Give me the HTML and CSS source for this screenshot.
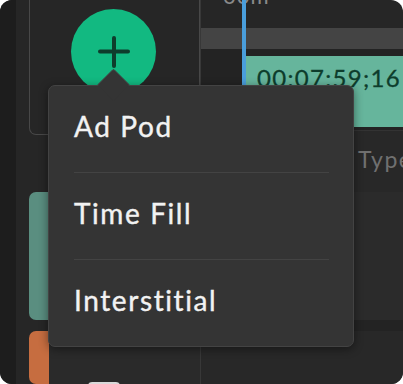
FILE: index.html
```html
<!DOCTYPE html>
<html lang="en">
<head>
    <meta charset="UTF-8">
    <meta name="viewport" content="width=device-width, initial-scale=1.0">
    <title>Add break</title>
    <link rel="stylesheet" href="styles.css">
</head>
<body>

    <div class="app">
        <div class="rail"></div>

        <div class="sidebar">
            <div class="add-card">
                <button class="add-button" aria-label="Add">
                    <svg width="32" height="32" viewBox="0 0 32 32">
                        <path d="M2 15.5 H30 M16 2 V30" stroke="#0e3d2c" stroke-width="4" stroke-linecap="round" fill="none"/>
                    </svg>
                </button>
            </div>
            <div class="list-row">
                <span class="tag tag-teal"></span>
                <span class="row-fill"></span>
            </div>
            <div class="list-row list-row-last">
                <span class="tag tag-orange"></span>
                <span class="row-fill">
                    <span class="checkbox"></span>
                </span>
            </div>
        </div>

        <div class="timeline">
            <div class="ruler"><span class="ruler-label">00m</span></div>
            <div class="ruler-band"></div>
            <div class="track">
                <div class="clip">00:07:59;16</div>
            </div>
            <div class="table-head"><span class="col-type">Type</span></div>
            <div class="table-row"></div>
            <div class="table-gap"></div>
            <div class="table-row table-row-alt"></div>
            <div class="playhead"></div>
        </div>

        <div class="menu" id="add-menu">
            <span class="menu-arrow"></span>
            <div class="menu-item">Ad Pod</div>
            <div class="menu-sep"></div>
            <div class="menu-item">Time Fill</div>
            <div class="menu-sep"></div>
            <div class="menu-item">Interstitial</div>
        </div>
    </div>

</body>
</html>
```

FILE: styles.css
```css
:root {
    --bg: #262626;
    --rail: #1d1d1d;
    --line: #484848;
    --green: #12b981;
    --teal: #66b59c;
    --teal-dark: #5a8e80;
    --orange: #c66d40;
    --menu-bg: #343434;
    --menu-line: #434343;
}

html, body {
    margin: 0;
    background: #fff;
    font-family: 'Lato', 'Liberation Sans', sans-serif;
}

.app {
    position: relative;
    width: 403px;
    height: 384px;
    border-radius: 12px;
    overflow: hidden;
    background: var(--bg);
    display: flex;
}

.rail {
    width: 16px;
    background: var(--rail);
    flex-shrink: 0;
}

/* left column */
.sidebar {
    width: 171px;
    padding-left: 13px;
    flex-shrink: 0;
    display: flex;
    flex-direction: column;
}

.add-card {
    flex-shrink: 0;
    margin-top: -10px;
    height: 145px;
    border: 1px solid var(--line);
    border-top: none;
    border-radius: 0 0 7px 7px;
    display: flex;
    justify-content: center;
    padding-top: 19px;
    box-sizing: border-box;
}

.add-button {
    width: 85px;
    height: 85px;
    border: none;
    border-radius: 50%;
    background: var(--green);
    padding: 0;
    margin-left: -2px;
    display: flex;
    align-items: center;
    justify-content: center;
}

.add-button svg {
    display: block;
}

.list-row {
    flex-shrink: 0;
    margin-top: 57px;
    height: 128px;
    display: flex;
}

.list-row-last {
    margin-top: 11px;
    height: auto;
    flex: 1;
    min-height: 0;
    overflow: hidden;
}

.tag {
    width: 20px;
    border-radius: 7px 0 0 7px;
}

.tag-teal {
    background: var(--teal-dark);
}

.tag-orange {
    background: var(--orange);
}

.row-fill {
    flex: 1;
    background: #2b2b2b;
}

.list-row-last .row-fill {
    background: #2a2a2a;
}

.checkbox {
    display: block;
    width: 32px;
    height: 20px;
    margin: 51px 0 0 39px;
    border-radius: 4px;
    background: #d9d9d9;
}

/* timeline */
.timeline {
    position: relative;
    flex: 1;
    display: flex;
    flex-direction: column;
    border-left: 1px solid #383838;
}

.ruler {
    flex-shrink: 0;
    height: 28px;
    overflow: hidden;
}

.ruler-label {
    display: block;
    margin-top: -15px;
    padding-left: 22px;
    font-size: 22px;
    line-height: 22px;
    color: #8a8a8a;
    letter-spacing: 1px;
}

.ruler-band {
    flex-shrink: 0;
    height: 21px;
    background: #444;
}

.track {
    flex-shrink: 0;
    height: 81px;
    box-sizing: border-box;
    padding: 7px 0 3px 44px;
    background: #232323;
}

.clip {
    height: 100%;
    background: var(--teal);
    color: #0d3d2c;
    font-size: 24px;
    line-height: 24px;
    padding: 10px 0 0 12px;
    box-sizing: border-box;
    letter-spacing: 1.3px;
    white-space: nowrap;
    -webkit-text-stroke: 0.3px #0d3d2c;
}

.table-head {
    flex-shrink: 0;
    height: 62px;
    box-sizing: border-box;
    border-top: 1px solid #333;
    background: #282828;
    padding: 0 0 4px 157px;
    font-size: 23px;
    line-height: 57px;
    color: #707070;
    letter-spacing: 1.5px;
    white-space: nowrap;
    overflow: hidden;
}

.table-row {
    flex-shrink: 0;
    height: 128px;
    background: #2b2b2b;
}

.table-gap {
    flex-shrink: 0;
    height: 11px;
    background: #232323;
}

.table-row-alt {
    flex: 1;
    background: #282828;
}

.playhead {
    position: absolute;
    top: 0;
    left: 41px;
    width: 4px;
    height: 100px;
    background: #4a9edb;
}

/* popover menu */
.menu {
    position: absolute;
    left: 48px;
    top: 85px;
    width: 306px;
    border: 1px solid var(--menu-line);
    border-radius: 7px;
    background: var(--menu-bg);
    box-shadow: 0 2px 10px rgba(0, 0, 0, 0.45);
    box-sizing: border-box;
}

.menu-arrow {
    position: absolute;
    top: -13px;
    left: 53px;
    width: 23px;
    height: 23px;
    background: var(--menu-bg);
    border-top: 1px solid var(--menu-line);
    border-left: 1px solid var(--menu-line);
    border-top-left-radius: 3px;
    transform: rotate(45deg);
    box-sizing: border-box;
}

.menu-item {
    position: relative;
    height: 86px;
    box-sizing: border-box;
    padding: 0 0 6px 25px;
    font-size: 28px;
    line-height: 80px;
    color: #f2f2f2;
    letter-spacing: 1.6px;
    -webkit-text-stroke: 0.4px #f2f2f2;
}

.menu-sep {
    height: 1px;
    margin: 0 24px 0 25px;
    background: var(--menu-line);
}
```
